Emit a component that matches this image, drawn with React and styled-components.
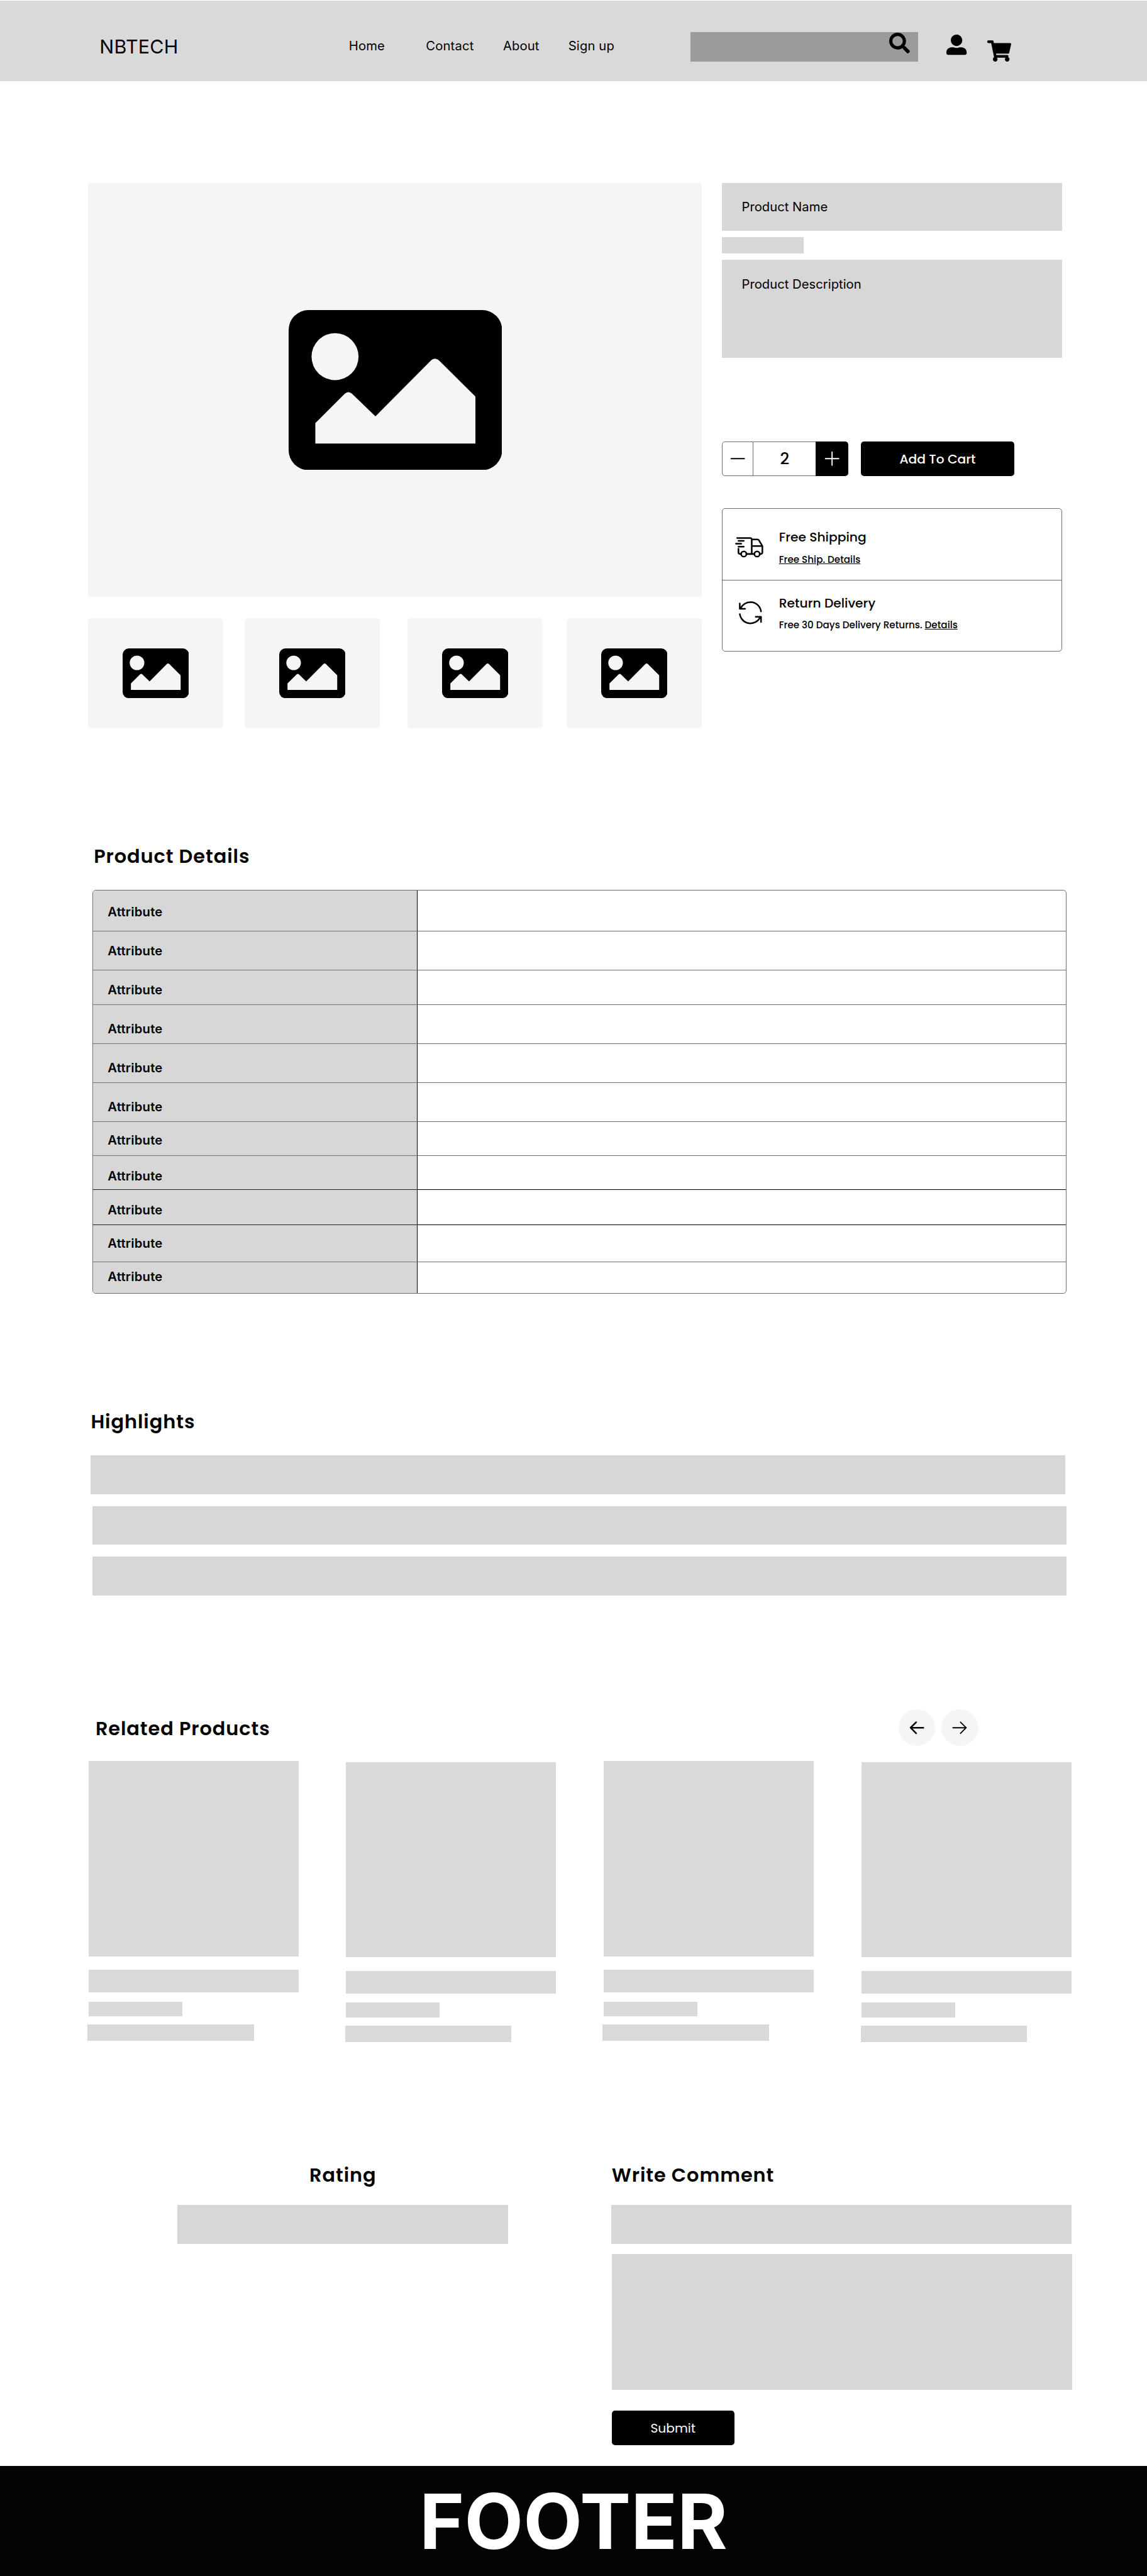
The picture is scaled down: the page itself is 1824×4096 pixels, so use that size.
import React from "react";
import styled, { createGlobalStyle } from "styled-components";
import { FaSearch, FaUserAlt, FaShoppingCart } from "react-icons/fa";

/* Sizes are given in artboard pixels (2880 wide) and drawn on an 1824 wide page. */
const u = (n) => `${+((n * 1824) / 2880).toFixed(3)}px`;

const GlobalStyle = createGlobalStyle`
  *, *::before, *::after { box-sizing: border-box; }
  body {
    margin: 0;
    background: #fff;
    color: #000;
    font-family: Inter, "Liberation Sans", sans-serif;
  }
  h1, h2, h3, p { margin: 0; }
  button { border: 0; padding: 0; font: inherit; color: inherit; background: none; }
`;

const geometric = `
  font-family: Poppins, Inter, "Liberation Sans", sans-serif;
  font-feature-settings: "cv11";
`;

const Page = styled.div`
  width: ${u(2880)};
  padding-top: ${u(2)};
`;

/* Header */
const Header = styled.header`
  display: grid;
  grid-template-columns: ${u(626)} ${u(858)} ${u(643)} ${u(102)} auto;
  align-items: start;
  height: ${u(202)};
  padding-left: ${u(250)};
  background: #d9d9d9;
`;
const Logo = styled.div`
  margin-top: ${u(84.5)};
  font-size: ${u(48)};
  line-height: ${u(60)};
  letter-spacing: ${u(0.4)};
`;
const Nav = styled.nav`
  display: grid;
  grid-template-columns: ${u(193.5)} ${u(193.5)} ${u(164)} auto;
  margin-top: ${u(93)};
  font-size: ${u(32)};
  line-height: ${u(40)};
  letter-spacing: ${u(0.2)};
`;
const NavLink = styled.a`
  white-space: nowrap;
`;
const SearchBox = styled.div`
  display: flex;
  justify-content: flex-end;
  width: ${u(572)};
  height: ${u(74)};
  margin-top: ${u(78)};
  padding: ${u(2)} ${u(21)} 0 0;
  background: #9b9b9b;
`;
const HeaderIcon = styled.span`
  display: block;
  margin-top: ${(p) => u(p.$top)};
  line-height: 0;
  svg { width: ${(p) => u(p.$w)}; height: ${(p) => u(p.$h)}; }
`;

/* Product */
const Product = styled.section`
  display: grid;
  grid-template-columns: ${u(1542)} ${u(854)};
  column-gap: ${u(50)};
  margin: ${u(256)} 0 0 ${u(220.4)};
`;
const Frame = styled.div`
  display: flex;
  align-items: center;
  justify-content: center;
  width: ${(p) => u(p.$w)};
  height: ${(p) => u(p.$h)};
  padding-left: ${(p) => u(p.$shift || 0)};
  border-radius: ${u(8)};
  background: #f5f5f5;
`;
const Thumbs = styled.div`
  display: grid;
  grid-template-columns: ${u(394)} ${u(408.5)} ${u(399.5)} ${u(340)};
  margin-top: ${u(54)};
`;
const Picture = styled.svg`
  display: block;
  width: ${(p) => u(p.$w)};
`;
const Block = styled.div`
  width: ${(p) => u(p.$w)};
  height: ${(p) => u(p.$h)};
  margin: ${(p) => u(p.$top || 0)} 0 0 ${(p) => u(p.$left || 0)};
  padding: ${(p) => u(p.$pad || 0)} 0 0 ${u(50)};
  background: ${(p) => p.$color || "#d7d7d7"};
  font-size: ${u(32)};
  line-height: ${u(40)};
`;
const BuyRow = styled.div`
  display: flex;
  gap: ${u(32)};
  margin-top: ${u(210)};
`;
const Stepper = styled.div`
  display: grid;
  grid-template-columns: ${u(79.5)} 1fr ${u(82)};
  width: ${u(318)};
  height: ${u(88)};
`;
const StepButton = styled.button`
  display: flex;
  align-items: center;
  justify-content: center;
  ${(p) =>
    p.$dark
      ? `background:#000; color:#fff; border-radius:0 ${u(8)} ${u(8)} 0;`
      : `border:1px solid #6c6c6c; border-radius:${u(8)} 0 0 ${u(8)};`}
  svg { width: ${u(48)}; height: ${u(48)}; }
`;
const Quantity = styled.div`
  ${geometric}
  display: flex;
  align-items: center;
  justify-content: center;
  border: solid #6c6c6c;
  border-width: 1px 0;
  font-size: ${u(40)};
  font-weight: 500;
`;
const Button = styled.button`
  ${geometric}
  display: block;
  width: ${(p) => u(p.$w)};
  height: ${u(88)};
  margin: ${(p) => u(p.$top || 0)} 0 0 ${(p) => u(p.$left || 0)};
  border-radius: ${u(8)};
  background: #000;
  color: #fff;
  font-size: ${u(32)};
  font-weight: ${(p) => p.$weight || 500};
`;
const Services = styled.div`
  margin-top: ${u(80)};
  height: ${u(360)};
  border: 1px solid #6c6c6c;
  border-radius: ${u(8)};
`;
const Service = styled.div`
  display: grid;
  grid-template-columns: ${u(112)} auto;
  height: ${u(178.5)};
  padding: ${(p) => u(p.$top)} 0 0 ${u(30)};
  & + & { border-top: 1px solid #6c6c6c; }
`;
const ServiceIcon = styled.svg`
  width: ${u(80)};
  height: ${u(80)};
  margin-top: ${u(8)};
`;
const ServiceTitle = styled.h3`
  ${geometric}
  font-size: ${u(32)};
  line-height: ${u(48)};
  font-weight: 500;
`;
const ServiceText = styled.p`
  ${geometric}
  margin-top: ${u(14)};
  font-size: ${u(24)};
  line-height: ${u(36)};
  font-weight: 500;
`;
const Underlined = styled.a`
  text-decoration: underline;
  text-decoration-thickness: 1px;
  text-underline-offset: ${u(2)};
`;

/* Sections */
const Title = styled.h2`
  ${geometric}
  font-size: ${u(48)};
  line-height: ${u(72)};
  font-weight: 600;
  letter-spacing: ${u(1.44)};
  margin-top: ${(p) => u(p.$top || 0)};
  margin-left: ${(p) => u(p.$left || 0)};
  text-align: ${(p) => p.$align || "left"};
  white-space: nowrap;
`;
const Details = styled.section`
  margin: ${u(286)} 0 0 ${u(232)};
`;
const Table = styled.div`
  width: ${u(2446)};
  margin-top: ${u(48.5)};
  border: 1px solid #6c6c6c;
  border-radius: ${u(8)};
  overflow: hidden;
`;
const TableRow = styled.div`
  display: grid;
  grid-template-columns: ${u(815.5)} auto;
  height: ${(p) => u(p.$h)};
`;
const LabelCell = styled.div`
  padding: ${(p) => u(p.$pad)} 0 0 ${u(37)};
  border-right: 1px solid #000;
  border-bottom: ${(p) => (p.$line ? `1px solid ${p.$line}` : 0)};
  background: #d7d7d7;
  font-size: ${u(32)};
  line-height: ${u(40)};
  font-weight: 600;
  letter-spacing: ${u(0.3)};
`;
const ValueCell = styled.div`
  border-bottom: ${(p) => (p.$line ? `1px solid ${p.$line}` : 0)};
`;
const Highlights = styled.section`
  margin: ${u(285.5)} 0 0 ${u(228)};
`;
const Related = styled.section`
  margin: ${u(285.5)} 0 0 ${u(222.4)};
`;
const RelatedHead = styled.div`
  display: grid;
  grid-template-columns: ${u(2034)} ${u(108)} auto;
  align-items: center;
  height: ${u(92)};
`;
const RoundButton = styled.button`
  display: flex;
  align-items: center;
  justify-content: center;
  width: ${u(92)};
  height: ${u(92)};
  border-radius: 50%;
  background: #f5f5f5;
  svg { width: ${u(48)}; height: ${u(48)}; }
`;
const Cards = styled.div`
  display: grid;
  grid-template-columns: ${u(646)} ${u(647)} ${u(648)} ${u(527)};
  margin-top: ${u(38)};
`;
const Card = styled.article`
  padding-top: ${(p) => u(p.$drop)};
`;
const Reviews = styled.section`
  display: grid;
  grid-template-columns: ${u(830)} auto;
  column-gap: ${u(258)};
  margin: ${u(298)} 0 ${u(52)} ${u(446)};
`;
const Footer = styled.footer`
  display: flex;
  align-items: center;
  justify-content: center;
  height: ${u(275)};
  background: #040404;
  color: #fff;
  font-size: ${u(192)};
  line-height: 1;
  font-weight: 700;
`;

const PictureIcon = ({ w }) => (
  <Picture $w={w} viewBox="0 0 536 402">
    <rect width="536" height="402" rx="50" />
    <circle cx="116.5" cy="117" r="59" fill="#f5f5f5" />
    <path
      fill="#f5f5f5"
      d="M67 335V284L141 210Q150 202 159 210L218 267L358 126Q367 118 377 126L469 217V335Z"
    />
  </Picture>
);

const rows = [
  [102.5, 33.7, "gray"],
  [98, 28.7, "gray"],
  [86, 28.3, "gray"],
  [98, 40.3, "gray"],
  [98, 40.3, "gray"],
  [98, 40.3, "gray"],
  [86, 26.3, "gray"],
  [85.5, 30.3, "black"],
  [88.5, 28.8, "black"],
  [92, 24.3, "gray"],
  [78, 16.8, null],
];
const lines = {
  gray: ["#757575", "#6c6c6c"],
  black: ["#222", "#000"],
};

export default function App() {
  return (
    <>
      <GlobalStyle />
      <Page>
        <Header>
          <Logo>NBTECH</Logo>
          <Nav>
            {["Home", "Contact", "About", "Sign up"].map((t) => (
              <NavLink key={t}>{t}</NavLink>
            ))}
          </Nav>
          <SearchBox>
            <HeaderIcon $w={52} $h={52} $top={0}><FaSearch /></HeaderIcon>
          </SearchBox>
          <HeaderIcon $w={51} $h={51} $top={85.5}><FaUserAlt /></HeaderIcon>
          <HeaderIcon $w={60} $h={54} $top={99}><FaShoppingCart /></HeaderIcon>
        </Header>

        <Product>
          <div>
            <Frame $w={1542} $h={1038} $shift={2.5}><PictureIcon w={536} /></Frame>
            <Thumbs>
              {[0, 1, 2, 3].map((i) => (
                <Frame key={i} $w={340} $h={276}><PictureIcon w={166.5} /></Frame>
              ))}
            </Thumbs>
          </div>
          <div>
            <Block $w={854} $h={120} $pad={38.5}>Product Name</Block>
            <Block $w={206} $h={40} $top={16} />
            <Block $w={854} $h={246} $top={16} $pad={40.5}>Product Description</Block>
            <BuyRow>
              <Stepper>
                <StepButton>
                  <svg viewBox="0 0 24 24" stroke="#000" strokeWidth="1.5" strokeLinecap="round"><path d="M3.7 12H20.3" /></svg>
                </StepButton>
                <Quantity>2</Quantity>
                <StepButton $dark>
                  <svg viewBox="0 0 24 24" stroke="#fff" strokeWidth="1.5" strokeLinecap="round"><path d="M3.7 12H20.3M12 3.7V20.3" /></svg>
                </StepButton>
              </Stepper>
              <Button $w={384}>Add To Cart</Button>
            </BuyRow>
            <Services>
              <Service $top={48}>
                <ServiceIcon viewBox="0 0 40 40" fill="none" stroke="#000" strokeWidth="2" strokeLinecap="round" strokeLinejoin="round">
                  <circle cx="11.67" cy="28.33" r="3.33" />
                  <circle cx="28.33" cy="28.33" r="3.33" />
                  <path d="M8.33 28.33H7C5.9 28.33 5 27.44 5 26.33V21.67M3.33 8.33H19.67C20.77 8.33 21.67 9.23 21.67 10.33V28.33M15 28.33H25M31.67 28.33H33C34.1 28.33 35 27.44 35 26.33V18.33M35 18.33H21.67M35 18.33L30.58 10.97C30.22 10.37 29.57 10 28.87 10H21.67" />
                  <path d="M5 11.82H11.67M1.82 15.45H8.48M5 19.09H11.67" />
                </ServiceIcon>
                <div>
                  <ServiceTitle>Free Shipping</ServiceTitle>
                  <ServiceText><Underlined>Free Ship. Details</Underlined></ServiceText>
                </div>
              </Service>
              <Service $top={33}>
                <ServiceIcon viewBox="0 0 40 40" fill="none" stroke="#000" strokeWidth="2" strokeLinecap="round" strokeLinejoin="round">
                  <path d="M33.33 18.33C32.93 15.4 31.57 12.68 29.46 10.6C27.36 8.52 24.63 7.18 21.69 6.8C18.75 6.42 15.77 7.02 13.21 8.5C10.64 9.98 8.64 12.27 7.5 15M6.67 8.33V15H13.33" />
                  <path d="M6.67 21.67C7.07 24.6 8.43 27.32 10.54 29.4C12.64 31.48 15.37 32.82 18.31 33.2C21.25 33.58 24.23 32.98 26.79 31.5C29.36 30.02 31.36 27.73 32.5 25M33.33 31.67V25H26.67" />
                </ServiceIcon>
                <div>
                  <ServiceTitle>Return Delivery</ServiceTitle>
                  <ServiceText>Free 30 Days Delivery Returns. <Underlined>Details</Underlined></ServiceText>
                </div>
              </Service>
            </Services>
          </div>
        </Product>

        <Details>
          <Title $left={3.5}>Product Details</Title>
          <Table>
            {rows.map(([h, pad, line], i) => (
              <TableRow key={i} $h={h}>
                <LabelCell $pad={pad} $line={line && lines[line][0]}>Attribute</LabelCell>
                <ValueCell $line={line && lines[line][1]} />
              </TableRow>
            ))}
          </Table>
        </Details>

        <Highlights>
          <Title>Highlights</Title>
          <Block $w={2446} $h={98} $top={48.5} />
          <Block $w={2446} $h={96.5} $top={30} $left={4} />
          <Block $w={2446} $h={98} $top={29.5} $left={4} />
        </Highlights>

        <Related>
          <RelatedHead>
            <Title $left={17.5} $top={7}>Related Products</Title>
            <RoundButton>
              <svg viewBox="0 0 24 24" fill="none" stroke="#000" strokeWidth="2" strokeLinecap="round" strokeLinejoin="round"><path d="M11 5L4 12L11 19M4 12H20" /></svg>
            </RoundButton>
            <RoundButton>
              <svg viewBox="0 0 24 24" fill="none" stroke="#000" strokeWidth="1.5" strokeLinecap="round" strokeLinejoin="round"><path d="M3.5 12H20M13 5L20 12L13 19" /></svg>
            </RoundButton>
          </RelatedHead>
          <Cards>
            {[0, 2.5, 0, 2.5].map((drop, i) => (
              <Card key={i} $drop={drop}>
                <Block $w={527} $h={490} $color="#d9d9d9" />
                <Block $w={527} $h={57} $top={34.5} $color="#d9d9d9" />
                <Block $w={235} $h={37} $top={22.5} $color="#d9d9d9" />
                <Block $w={417.5} $h={41} $top={21} $left={-2.2} $color="#d9d9d9" />
              </Card>
            ))}
          </Cards>
        </Related>

        <Reviews>
          <div>
            <Title $align="center">Rating</Title>
            <Block $w={830} $h={98} $top={39} />
          </div>
          <div>
            <Title $left={2}>Write Comment</Title>
            <Block $w={1156} $h={98} $top={39} />
            <Block $w={1156} $h={340} $top={26} $left={2} />
            <Button $w={308} $top={52} $left={2} $weight={400}>Submit</Button>
          </div>
        </Reviews>

        <Footer>FOOTER</Footer>
      </Page>
    </>
  );
}
